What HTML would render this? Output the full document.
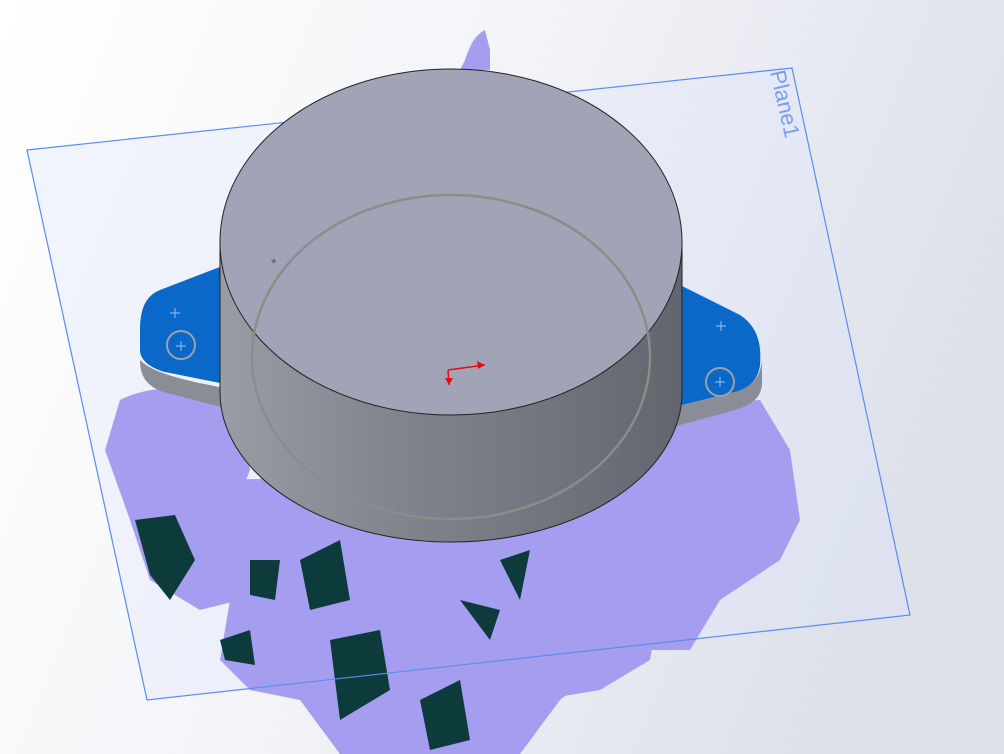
<!DOCTYPE html>
<html><head><meta charset="utf-8"><style>
html,body{margin:0;padding:0;width:1004px;height:754px;overflow:hidden}
svg{display:block}
</style></head><body>
<svg width="1004" height="754" viewBox="0 0 1004 754" xmlns="http://www.w3.org/2000/svg">
<defs>
<linearGradient id="bg" x1="0" y1="0" x2="1" y2="0.3">
<stop offset="0" stop-color="#ffffff"/><stop offset="0.5" stop-color="#f3f4f8"/><stop offset="1" stop-color="#dde1ea"/>
</linearGradient>
<linearGradient id="side" x1="0" y1="0" x2="1" y2="0">
<stop offset="0" stop-color="#9a9ca6"/><stop offset="0.35" stop-color="#84868f"/><stop offset="0.75" stop-color="#70727c"/><stop offset="1" stop-color="#62646e"/>
</linearGradient>
</defs>
<rect width="1004" height="754" fill="url(#bg)"/>
<path d="M27 150 L792 68 L910 615 L147 700 Z" fill="#dfe6fb" fill-opacity="0.35"/>
<!-- mesh -->
<g fill="#a59ef0">
<path d="M120 400 C160 380 220 385 240 420 L250 470 L230 520 L240 600 L200 610 L150 580 L130 520 L105 450 Z"/>
<path d="M210 480 L660 470 L670 600 L620 650 L560 700 L520 754 L340 754 L300 700 L250 690 L220 660 L230 600 Z"/>
<path d="M640 410 L760 400 L790 450 L800 520 L780 560 L720 600 L690 650 L640 650 Z"/>
<path d="M560 620 L660 600 L650 660 L600 690 L540 700 Z"/>
<path d="M465 60 C470 45 475 35 485 30 L490 50 L490 70 L460 70 Z"/>
</g>
<g fill="#0d3a3a">
<path d="M135 520 L175 515 L195 560 L170 600 L150 575 Z"/>
<path d="M300 560 L340 540 L350 600 L310 610 Z"/>
<path d="M330 640 L380 630 L390 690 L340 720 Z"/>
<path d="M420 700 L460 680 L470 740 L430 750 Z"/>
<path d="M250 560 L280 560 L275 600 L250 595 Z"/>
<path d="M500 560 L530 550 L520 600 Z"/>
<path d="M220 640 L250 630 L255 665 L225 660 Z"/>
<path d="M460 600 L500 610 L490 640 Z"/>
</g>
<path d="M27 150 L792 68 L910 615 L147 700 Z" fill="none" stroke="#5a8cf0" stroke-width="1.2"/>
<text x="0" y="0" transform="translate(770 72) rotate(77)" font-family="Liberation Sans, sans-serif" font-size="22" fill="#7a9cf0">Plane1</text>
<!-- tabs -->
<path d="M225 265 L160 290 C145 296 140 310 140 330 L140 350 C140 360 150 368 165 372 L225 384 Z" fill="#0a68c8"/>
<path d="M140 330 L140 360 C150 370 170 378 225 388 L225 408 L175 395 C150 390 140 380 140 360 Z" fill="#8a8c96"/>
<path d="M680 285 L740 315 C755 325 762 340 760 365 C758 380 750 388 735 392 L662 410 Z" fill="#0a68c8"/>
<path d="M662 410 L735 392 C750 388 760 380 762 360 L762 385 C760 400 750 405 735 410 L662 430 Z" fill="#8a8c96"/>
<circle cx="181" cy="345" r="14" fill="none" stroke="#a0a0a8" stroke-width="2"/>
<circle cx="720" cy="382" r="14" fill="none" stroke="#a0a0a8" stroke-width="2"/>
<g stroke="#9cc0f0" stroke-width="1"><path d="M170 313h10M175 308v10M176 346h10M181 341v10M716 326h10M721 321v10M715 382h10M720 377v10"/></g>
<!-- cylinder -->
<path d="M220 242 L220 392 A231 150 0 0 0 682 392 L682 242 Z" fill="url(#side)"/>
<ellipse cx="451" cy="242" rx="231" ry="173" fill="#a0a4b6" stroke="#222" stroke-width="1"/>
<path d="M220 242 L220 392 A231 150 0 0 0 682 392 L682 242" fill="none" stroke="#222" stroke-width="1"/>
<ellipse cx="451" cy="357" rx="199" ry="162" fill="none" stroke="#8c8c88" stroke-width="2.5"/>
<text x="271" y="268" font-family="Liberation Sans, sans-serif" font-size="14" fill="#555">*</text>
<path d="M448 370 L485 365" stroke="#e01010" stroke-width="1.5"/><path d="M485 365 l-8 -4 l1 8 z" fill="#e01010"/>
<path d="M448 370 L449 385" stroke="#e01010" stroke-width="1.5"/><path d="M449 385 l-4 -7 l8 0 z" fill="#e01010"/>
</svg>
</body></html>
